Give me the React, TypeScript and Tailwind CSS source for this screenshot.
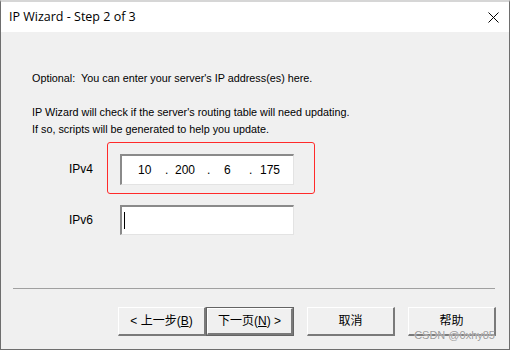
import React from 'react';

const ui = { fontFamily: '"Liberation Sans", "Noto Sans CJK SC", sans-serif' };

const RetroButton: React.FC<{ label: React.ReactNode; isDefault?: boolean }> = ({ label, isDefault }) => (
  <div
    className={`h-[29px] w-[88px] ${isDefault ? 'border border-[#646464]' : ''}`}
  >
    <div
      className={`h-full w-full bg-[#f0f0f0] border-t border-l border-white border-b-2 border-r-2 border-b-[#7a7a7a] border-r-[#7a7a7a] flex items-center justify-center text-[12px] text-black`}
    >
      {label}
    </div>
  </div>
);

const App: React.FC = () => {
  return (
    <div
      className="w-[510px] h-[350px] flex flex-col bg-[#f0f0f0] border-x border-b border-[#6e6e6e] border-t-2 border-t-[#d6d6d6] relative overflow-hidden"
      style={ui}
    >
      {/* Title bar */}
      <div className="h-[30px] bg-white flex items-center justify-between pl-[8px] pr-[10px] shrink-0">
        <span className="text-[12.5px] text-black" style={{ fontFamily: '"Open Sans", "Noto Sans", sans-serif' }}>
          IP Wizard - Step 2 of 3
        </span>
        <svg width="11" height="11" viewBox="0 0 11 11" className="mt-[1px]">
          <path d="M0.5 0.5 L10.5 10.5 M10.5 0.5 L0.5 10.5" stroke="#000" strokeWidth="1" />
        </svg>
      </div>

      {/* Body */}
      <div className="flex-1 flex flex-col text-[10.8px] text-black leading-[17px]">
        <div className="pl-[31px] pt-[38px]">
          <p className="mb-[17px]">Optional:&nbsp; You can enter your server's IP address(es) here.</p>
          <p>IP Wizard will check if the server's routing table will need updating.</p>
          <p>If so, scripts will be generated to help you update.</p>
        </div>

        {/* Fields */}
        <div className="relative mt-[16px] pl-[68px] flex flex-col gap-[20px]">
          <div className="absolute left-[106px] top-[-12px] w-[208px] h-[52px] border border-[#ff2a2a] rounded-[3px]" />
          <div className="flex items-center">
            <span className="w-[51px] text-[12px]">IPv4</span>
            <div className="w-[174px] h-[31px] bg-white border-t-2 border-l-2 border-[#8a8a8a] border-b border-r border-b-[#e3e3e3] border-r-[#e3e3e3] flex items-center text-[12px]">
              <span className="ml-[16px] w-[27px]">10</span>
              <span className="w-[10px]">.</span>
              <span className="w-[32px]">200</span>
              <span className="w-[17px]">.</span>
              <span className="w-[25px]">6</span>
              <span className="w-[11px]">.</span>
              <span>175</span>
            </div>
          </div>
          <div className="flex items-center">
            <span className="w-[51px] text-[12px]">IPv6</span>
            <div className="w-[174px] h-[30px] bg-white border-t-2 border-l-2 border-[#8a8a8a] border-b border-r border-b-[#e3e3e3] border-r-[#e3e3e3] flex items-center">
              <div className="ml-[2px] w-px h-[17px] bg-black" />
            </div>
          </div>
        </div>

        {/* Separator */}
        <div className="mt-[53px] mx-[12px] mr-[14px] h-px bg-[#a0a0a0]" />

        {/* Buttons */}
        <div className="mt-[18px] flex justify-end pr-[13px]">
          <RetroButton label={<span>&lt; 上一步(<u>B</u>)</span>} />
          <RetroButton isDefault label={<span>下一页(<u>N</u>) &gt;</span>} />
          <div className="w-[13px]" />
          <RetroButton label="取消" />
          <div className="w-[13px]" />
          <RetroButton label="帮助" />
        </div>
      </div>

      {/* Watermark */}
      <span
        className="absolute right-[14px] bottom-[6px] text-[11px] text-[#9a9a9a]"
        style={{ textShadow: '0 0 1px #fff' }}
      >
        CSDN @0xhy85
      </span>
    </div>
  );
};

export default App;
